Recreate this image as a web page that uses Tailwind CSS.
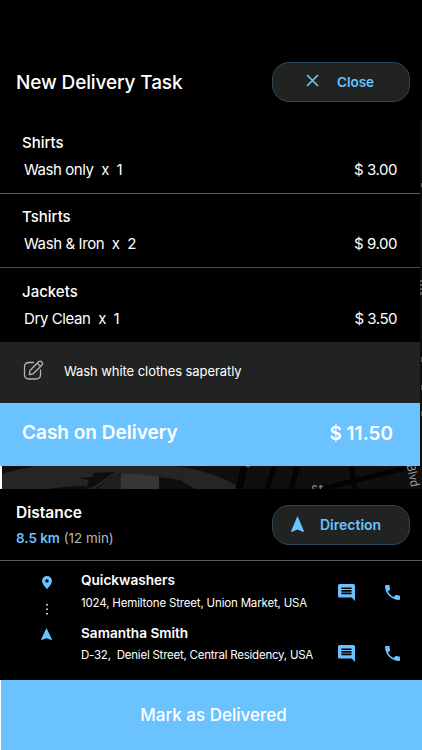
<!DOCTYPE html>
<html lang="en">
<head>
<meta charset="utf-8">
<title>New Delivery Task</title>
<script src="https://cdn.jsdelivr.net/npm/@tailwindcss/browser@4"></script>
</head>
<body class="bg-black">
<main class="relative flex h-[750px] w-[422px] flex-col overflow-hidden bg-black font-['Inter','Liberation_Sans',sans-serif] text-white">
  <svg class="absolute top-[120px] right-0 h-[346px] w-[2px]" viewBox="0 0 2 346"><path fill="#0e0e0e" d="M0 0h2v346H0z"/><path fill="#555" d="M1 63h1v4H1zM0 160h2v2H0zM0 164h2v2H0zM0 168h2v2H0zM0 172h2v3H0zM1 237h1v5H1zM1 265h1v5H1zM1 291h1v5H1z"/></svg>
  <header class="flex h-[120px] shrink-0 items-start justify-between pt-[62px] pr-[12px] pl-[16px]">
    <h1 class="text-[19px] leading-[41px] font-medium tracking-[-0.12px]">New Delivery Task</h1>
    <button class="flex h-[40px] w-[138px] items-center rounded-[17px] border border-[#2c485b] bg-[#212322] pl-[33px] text-[#6ac2ff]">
      <svg class="mt-[-3px] size-[13px]" viewBox="0 0 13 13" fill="none" stroke="currentColor" stroke-width="1.7"><path d="M1 1l11 11M12 1L1 12"/></svg>
      <span class="ml-[18px] text-[13.500px] leading-[38px] font-semibold">Close</span>
    </button>
  </header>

  <section class="w-[420px] shrink-0">
    <div class="h-[74px] border-b border-[#5c5c5c] pt-[12px] pr-[23px] pl-[22px]">
      <h2 class="text-[15px] leading-[21px] font-medium">Shirts</h2>
      <div class="mt-[6px] flex justify-between pl-[2px] text-[15px] leading-[21px] whitespace-nowrap"><span class="tracking-[-0.43px] whitespace-pre">Wash only  x  1</span><span class="tracking-[-0.45px]">$ 3.00</span></div>
    </div>
    <div class="h-[74px] border-b border-[#4a4a4a] pt-[12px] pr-[23px] pl-[22px]">
      <h2 class="text-[15px] leading-[21px] font-medium">Tshirts</h2>
      <div class="mt-[6px] flex justify-between pl-[2px] text-[15px] leading-[21px] whitespace-nowrap"><span class="tracking-[-0.4px] whitespace-pre">Wash &amp; Iron  x  2</span><span class="tracking-[-0.45px]">$ 9.00</span></div>
    </div>
    <div class="h-[74px] pt-[13px] pr-[23px] pl-[22px]">
      <h2 class="text-[15px] leading-[21px] font-medium">Jackets</h2>
      <div class="mt-[6px] flex justify-between pl-[2px] text-[15px] leading-[21px] whitespace-nowrap"><span class="tracking-[-0.4px] whitespace-pre">Dry Clean  x  1</span><span class="tracking-[-0.5px]">$ 3.50</span></div>
    </div>
  </section>

  <div class="flex h-[61px] w-[420px] shrink-0 items-center bg-[#212322] pl-[23px]">
    <svg class="mt-[-5px] size-[21px]" viewBox="0 0 21 21" fill="none" stroke="#b5b6b6" stroke-width="1.3" stroke-linecap="round" stroke-linejoin="round"><path d="M10.500 2.500H6Q1.500 2.500 1.500 7V14.500Q1.500 19 6 19H13Q17.500 19 17.500 14.500V10M6.300 14.500L7 10.500L15.500 1.800Q17.200.4 18.800 2Q20.300 3.600 18.800 5.200L10.200 13.800ZM14.300 3.200L17.500 6.400"/></svg>
    <p class="ml-[20px] mt-[-4px] text-[13px] leading-[20px] tracking-[-0.07px]">Wash white clothes saperatly</p>
  </div>
  <div class="flex h-[63px] w-[420px] shrink-0 justify-between bg-[#6ac2ff] pr-[27px] pl-[22px] text-[19px] leading-[59px] font-semibold">
    <span>Cash on Delivery</span><span class="pt-px">$ 11.50</span>
  </div>

  <svg class="h-[23px] w-[422px] shrink-0" viewBox="0 0 422 23">
    <path fill="#0f0f0f" d="M0 0h422v23H0z"/>
    <path fill="#252525" d="M2 8Q18 3 36 0H174Q215 5 242 23H2Z"/>
    <path fill="#0e0e0e" d="M93 7L115 6 95 20 86 23 89 14 79 12 93 11ZM48 23Q65 20 85 20L86 23ZM121 7L120 23H94Q106 16 111 11ZM159 11L180 14 195 23H159Z"/>
    <path fill="#202020" d="M121 8V23H97L115 9Z"/>
    <path fill="#363636" d="M122 8H138L159 11V23H121V12Z"/>
    <path fill="none" stroke="#030303" stroke-width="7" d="M245-1L239 23"/>
    <path fill="none" stroke="#030303" stroke-width="5" d="M275-1L267 23M298-1L291 23M351-1L355 23M321 23L422-2"/>
    <circle cx="248" cy="-1" r="2.500" fill="#555"/>
    <path fill="none" stroke="#777" stroke-width="1.400" d="M317 20.500Q313 18.500 312.500 21.500L314 23M319 20.500H323M320.500 19V23"/>
    <text transform="translate(406.500 -1) rotate(78)" fill="#999" font-size="12" font-family="Roboto">Blvd</text>
    <path fill="#fff" d="M0 0h2v23H0z"/>
  </svg>

  <section class="flex h-[72px] shrink-0 justify-between border-b border-[#5a5a5a] pr-[12px] pl-[16px]">
    <div class="pt-[13px]">
      <h2 class="text-[15.500px] leading-[22px] font-semibold">Distance</h2>
      <p class="mt-[4px] text-[13.400px] leading-[21px] text-[#b8b8b8]"><span class="font-semibold text-[#6ac2ff]">8.5 km</span> (12 min)</p>
    </div>
    <button class="mt-[16px] flex h-[40px] w-[138px] items-center rounded-[17px] border border-[#2c485b] bg-[#212322] pl-[18px] text-[#6ac2ff]">
      <svg class="mt-[-3px] h-[16px] w-[13px]" viewBox="0 0 13 16" fill="currentColor"><path d="M6.500 0L13 15.200 12.300 16 6.500 13.500.7 16 0 15.200Z"/></svg>
      <span class="ml-[16px] text-[14px] leading-[38px] font-semibold">Direction</span>
    </button>
  </section>

  <section class="flex h-[119px] shrink-0">
    <div class="flex w-[81px] flex-col items-center pt-[15px] pl-[12px] text-[#6ac2ff]">
      <svg class="h-[13px] w-[10px]" viewBox="0 0 10 13" fill="currentColor"><path fill-rule="evenodd" d="M5 0A4.900 4.900 0 0 1 10 4.900C10 8 5 13 5 13S0 8 0 4.900A4.900 4.900 0 0 1 5 0ZM5 3.200A1.700 1.700 0 1 0 5 6.600A1.700 1.700 0 1 0 5 3.200Z"/></svg>
      <svg class="mt-[15px] h-[12px] w-[2px]" viewBox="0 0 2 12" fill="#d0d0d0"><path d="M0 0h2v1.500H0zM0 4.500h2V6H0zM0 9h2v1.500H0z"/></svg>
      <svg class="mt-[12px] mr-[1px] h-[12px] w-[11px]" viewBox="0 0 13 16" preserveAspectRatio="none" fill="currentColor"><path d="M6.500 0L13 15.200 12.300 16 6.500 13.500.7 16 0 15.200Z"/></svg>
    </div>
    <div class="w-[257px] pt-[9px]">
      <h3 class="text-[13.600px] leading-[21px] font-semibold">Quickwashers</h3>
      <p class="mt-[2px] text-[11.500px] leading-[21px] tracking-[-0.17px] whitespace-nowrap">1024, Hemiltone Street, Union Market, USA</p>
      <h3 class="mt-[9px] text-[13.600px] leading-[21px] font-semibold">Samantha Smith</h3>
      <p class="mt-[1px] text-[11.500px] leading-[21px] tracking-[-0.23px] whitespace-pre">D-32,  Deniel Street, Central Residency, USA</p>
    </div>
    <div class="mt-[23px] grid h-[78px] w-[62px] grid-cols-[17px_15px] content-between justify-between text-[#6ac2ff]">
      <svg class="size-[17px]" viewBox="2 2 20 20" fill="currentColor"><path d="M21.990 4c0-1.100-.89-2-1.990-2H4c-1.100 0-2 .9-2 2v12c0 1.100.9 2 2 2h14l4 4-.01-18zM18 14H6v-2h12v2zm0-3H6V9h12v2zm0-3H6V6h12v2z"/></svg>
      <svg class="mt-[1px] size-[15px]" viewBox="3 3 18 18" fill="currentColor"><path d="M6.620 10.790c1.440 2.830 3.760 5.140 6.590 6.590l2.200-2.200c.27-.27.67-.36 1.020-.24 1.120.37 2.330.57 3.570.57.55 0 1 .45 1 1V20c0 .55-.45 1-1 1-9.390 0-17-7.610-17-17 0-.55.45-1 1-1h3.500c.55 0 1 .45 1 1 0 1.250.2 2.450.57 3.570.11.35.03.74-.25 1.020l-2.200 2.200z"/></svg>
      <svg class="size-[17px]" viewBox="2 2 20 20" fill="currentColor"><path d="M21.990 4c0-1.100-.89-2-1.990-2H4c-1.100 0-2 .9-2 2v12c0 1.100.9 2 2 2h14l4 4-.01-18zM18 14H6v-2h12v2zm0-3H6V9h12v2zm0-3H6V6h12v2z"/></svg>
      <svg class="mt-[1px] size-[15px]" viewBox="3 3 18 18" fill="currentColor"><path d="M6.620 10.790c1.440 2.830 3.760 5.140 6.590 6.590l2.200-2.200c.27-.27.67-.36 1.020-.24 1.120.37 2.330.57 3.570.57.55 0 1 .45 1 1V20c0 .55-.45 1-1 1-9.390 0-17-7.610-17-17 0-.55.45-1 1-1h3.500c.55 0 1 .45 1 1 0 1.250.2 2.450.57 3.570.11.35.03.74-.25 1.020l-2.200 2.200z"/></svg>
    </div>
  </section>

  <button class="h-[70px] shrink-0 border-l border-white bg-[#6ac2ff] pt-px pl-[4px] text-[17px] leading-[69px] font-medium">Mark as Delivered</button>
</main>
</body>
</html>
